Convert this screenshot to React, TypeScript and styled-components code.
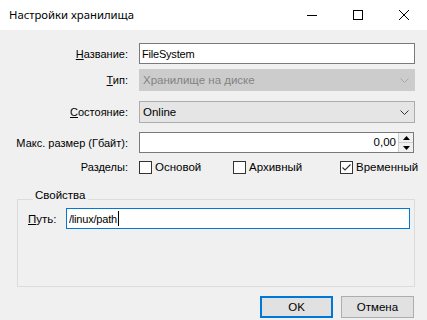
import React from 'react';
import styled, { createGlobalStyle } from 'styled-components';

const GlobalStyle = createGlobalStyle`
  html, body {
    margin: 0;
    padding: 0;
    background: #f0f0f0;
  }
  body {
    font-family: 'Liberation Sans', Arial, sans-serif;
    font-size: 11px;
    color: #000;
  }
`;

const Window = styled.div`
  width: 427px;
  height: 320px;
  display: flex;
  flex-direction: column;
  overflow: hidden;
`;

const TitleBar = styled.div`
  height: 30px;
  flex: none;
  background: #fff;
  display: flex;
  align-items: center;
`;

const Title = styled.div`
  flex: 1;
  padding-left: 9px;
  font-family: 'Noto Sans', 'Open Sans', sans-serif;
  font-size: 11.3px;
  line-height: 30px;
`;

const WinButton = styled.div`
  width: 46px;
  height: 30px;
  display: flex;
  align-items: center;
  justify-content: center;
`;

const Body = styled.div`
  flex: 1;
  background: #f0f0f0;
  padding-top: 13px;
`;

const FieldRow = styled.div<{ $top?: number }>`
  display: grid;
  grid-template-columns: 128px 1fr;
  column-gap: 11px;
  align-items: center;
  padding-right: 12px;
  margin-top: ${(p) => p.$top ?? 0}px;
`;

const Label = styled.label`
  text-align: right;
  font-size: 11px;
  line-height: 16px;
  white-space: nowrap;
`;

const TextInput = styled.div<{ $focused?: boolean }>`
  box-sizing: border-box;
  height: 21px;
  border: 1px solid ${(p) => (p.$focused ? '#0078d7' : '#7a7a7a')};
  background: #fff;
  padding: 0 2px;
  display: flex;
  align-items: center;
  font-size: 11px;
  letter-spacing: -0.2px;
`;

const Caret = styled.span`
  display: inline-block;
  width: 1px;
  height: 15px;
  background: #000;
  margin-left: 1px;
`;

const Combo = styled.div<{ $disabled?: boolean }>`
  box-sizing: border-box;
  height: 22px;
  border: 1px solid ${(p) => (p.$disabled ? '#cccccc' : '#adadad')};
  background: ${(p) => (p.$disabled ? '#cccccc' : '#e5e5e5')};
  color: ${(p) => (p.$disabled ? '#838383' : '#000')};
  display: flex;
  align-items: center;
  justify-content: space-between;
  padding: 0 5px 0 3px;
  font-size: 11.5px;
`;

const Numeric = styled.div`
  box-sizing: border-box;
  height: 21px;
  border: 1px solid #7a7a7a;
  background: #fff;
  display: flex;
  align-items: stretch;
  margin-right: 1px;
`;

const NumericValue = styled.div`
  flex: 1;
  text-align: right;
  padding-right: 2px;
  line-height: 19px;
  font-size: 11.5px;
`;

const Spinner = styled.div`
  width: 14px;
  display: flex;
  flex-direction: column;
  border-left: 1px solid #cfcfcf;
`;

const SpinPart = styled.div`
  flex: 1;
  display: flex;
  align-items: center;
  justify-content: center;
  background: #f0f0f0;
  & + & {
    border-top: 1px solid #cfcfcf;
  }
`;

const Checks = styled.div`
  display: grid;
  grid-template-columns: 94px 107px auto;
  align-items: center;
`;

const CheckItem = styled.div`
  display: flex;
  align-items: center;
  gap: 3px;
  font-size: 11.5px;
`;

const Box = styled.div`
  box-sizing: border-box;
  width: 13px;
  height: 13px;
  border: 1px solid #333;
  background: #fff;
  display: flex;
  align-items: center;
  justify-content: center;
`;

const GroupBox = styled.div`
  box-sizing: border-box;
  margin: 24px 12px 0 17px;
  height: 88px;
  border: 1px solid #dcdcdc;
  padding: 0 4px 0 10px;
`;

const GroupTitle = styled.div`
  width: fit-content;
  margin: -12px 0 0 5px;
  padding: 0 2px 0 2px;
  background: #f0f0f0;
  font-size: 11.5px;
  line-height: 14px;
`;

const PathRow = styled.div`
  display: grid;
  grid-template-columns: 38px 1fr;
  align-items: center;
  margin-top: 6px;
`;

const PathLabel = styled.label`
  font-size: 11.5px;
  line-height: 16px;
`;

const Buttons = styled.div`
  display: flex;
  justify-content: flex-end;
  gap: 8px;
  padding-right: 13px;
  margin-top: 9px;
`;

const Button = styled.div<{ $default?: boolean }>`
  box-sizing: border-box;
  width: 73px;
  height: 22px;
  background: #e1e1e1;
  border: ${(p) => (p.$default ? '2px solid #0078d7' : '1px solid #adadad')};
  display: flex;
  align-items: center;
  justify-content: center;
  font-size: 11.5px;
`;

const Chevron = ({ color }: { color: string }) => (
  <svg width="9" height="5" viewBox="0 0 9 5">
    <path d="M0.5 0.5 L4.5 4.5 L8.5 0.5" fill="none" stroke={color} strokeWidth="1" />
  </svg>
);

const Check = ({ checked }: { checked?: boolean }) => (
  <Box>
    {checked && (
      <svg width="11" height="11" viewBox="0 0 11 11">
        <path d="M1.5 5.5 L4 8 L9.5 2.5" fill="none" stroke="#333" strokeWidth="1.1" />
      </svg>
    )}
  </Box>
);

const App: React.FC = () => (
  <Window>
    <GlobalStyle />
    <TitleBar>
      <Title>Настройки хранилища</Title>
      <WinButton>
        <svg width="10" height="10" viewBox="0 0 10 10">
          <path d="M0 5.5 H10" stroke="#000" strokeWidth="1" />
        </svg>
      </WinButton>
      <WinButton>
        <svg width="10" height="10" viewBox="0 0 10 10">
          <rect x="0.5" y="0.5" width="9" height="9" fill="none" stroke="#000" strokeWidth="1" />
        </svg>
      </WinButton>
      <WinButton>
        <svg width="10" height="10" viewBox="0 0 10 10">
          <path d="M0 0 L10 10 M10 0 L0 10" stroke="#000" strokeWidth="1" />
        </svg>
      </WinButton>
    </TitleBar>
    <Body>
      <FieldRow>
        <Label>
          <u>Н</u>азвание:
        </Label>
        <TextInput>FileSystem</TextInput>
      </FieldRow>
      <FieldRow $top={5}>
        <Label>
          <u>Т</u>ип:
        </Label>
        <Combo $disabled>
          <span>Хранилище на диске</span>
          <Chevron color="#a8a8a8" />
        </Combo>
      </FieldRow>
      <FieldRow $top={10}>
        <Label>
          <u>С</u>остояние:
        </Label>
        <Combo>
          <span>Online</span>
          <Chevron color="#333" />
        </Combo>
      </FieldRow>
      <FieldRow $top={9}>
        <Label>Макс. размер (Гбайт):</Label>
        <Numeric>
          <NumericValue>0,00</NumericValue>
          <Spinner>
            <SpinPart>
              <svg width="7" height="4" viewBox="0 0 7 4">
                <path d="M0 4 L3.5 0 L7 4 Z" fill="#000" />
              </svg>
            </SpinPart>
            <SpinPart>
              <svg width="7" height="4" viewBox="0 0 7 4">
                <path d="M0 0 L3.5 4 L7 0 Z" fill="#000" />
              </svg>
            </SpinPart>
          </Spinner>
        </Numeric>
      </FieldRow>
      <FieldRow $top={6}>
        <Label>Разделы:</Label>
        <Checks>
          <CheckItem>
            <Check />
            <span>Основой</span>
          </CheckItem>
          <CheckItem>
            <Check />
            <span>Архивный</span>
          </CheckItem>
          <CheckItem>
            <Check checked />
            <span>Временный</span>
          </CheckItem>
        </Checks>
      </FieldRow>
      <GroupBox>
        <GroupTitle>Свойства</GroupTitle>
        <PathRow>
          <PathLabel>
            <u>П</u>уть:
          </PathLabel>
          <TextInput $focused>
            /linux/path
            <Caret />
          </TextInput>
        </PathRow>
      </GroupBox>
      <Buttons>
        <Button $default>OK</Button>
        <Button>Отмена</Button>
      </Buttons>
    </Body>
  </Window>
);

export default App;
